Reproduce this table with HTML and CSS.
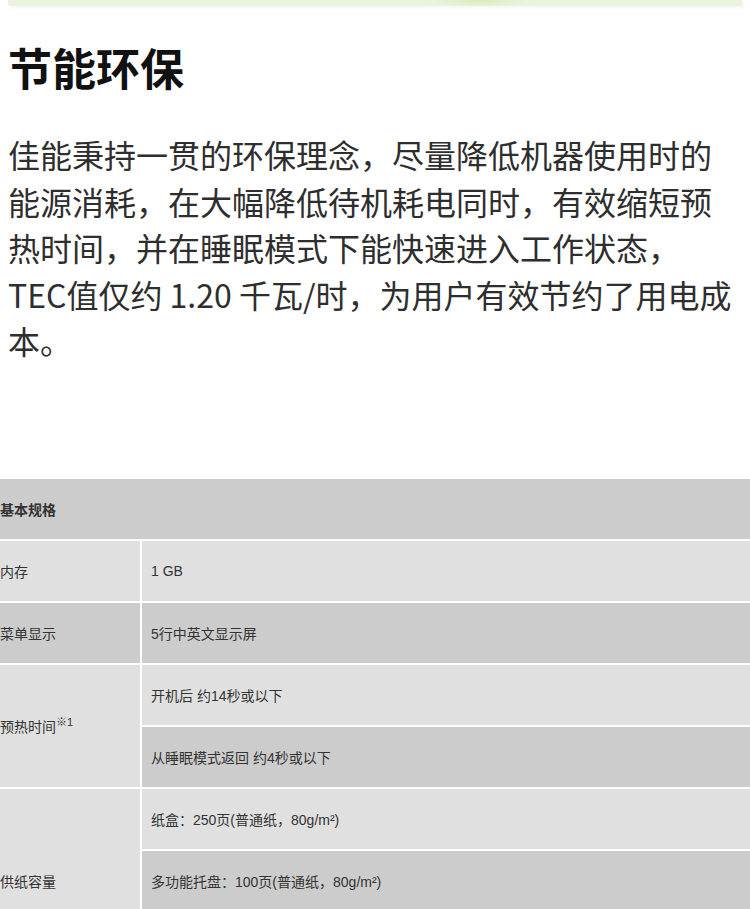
FILE: index.html
```html
<!DOCTYPE html>
<html lang="zh-CN">
<head>
<meta charset="utf-8">
<title>节能环保</title>
<link rel="stylesheet" href="styles.css">
</head>
<body>
<div class="banner-edge"></div>
<section class="eco">
  <h2 class="eco-title">节能环保</h2>
  <p class="eco-text">佳能秉持一贯的环保理念，尽量降低机器使用时的能源消耗，在大幅降低待机耗电同时，有效缩短预热时间，并在睡眠模式下能快速进入工作状态，TEC值仅约 1.20 千瓦/时，为用户有效节约了用电成本。</p>
</section>
<table class="spec">
  <colgroup><col class="spec-key"><col class="spec-val"></colgroup>
  <tr class="odd"><th colspan="2" class="spec-head">基本规格</th></tr>
  <tr class="even"><td class="k">内存</td><td class="v">1 GB</td></tr>
  <tr class="odd"><td class="k">菜单显示</td><td class="v">5行中英文显示屏</td></tr>
  <tr class="even"><td class="k" rowspan="2">预热时间<sup class="note">※1</sup></td><td class="v">开机后 约14秒或以下</td></tr>
  <tr class="odd"><td class="v">从睡眠模式返回 约4秒或以下</td></tr>
  <tr class="even"><td class="k" rowspan="3">供纸容量</td><td class="v">纸盒：250页(普通纸，80g/m²)</td></tr>
  <tr class="odd"><td class="v">多功能托盘：100页(普通纸，80g/m²)</td></tr>
  <tr class="even"><td class="v"></td></tr>
</table>
</body>
</html>
```
FILE: styles.css
```css
html, body {
  margin: 0;
  padding: 0;
  background: #ffffff;
}
body {
  font-family: "Noto Sans CJK SC", "Noto Sans", sans-serif;
  width: 750px;
  overflow-x: hidden;
}
.banner-edge {
  height: 6px;
  margin: 0 8px;
  background:
    radial-gradient(ellipse 52px 7px at 471px 0, #dcebb8 0%, rgba(220,235,184,0) 100%),
    #ebf3de;
  box-shadow: 2px 2px 3px rgba(0, 0, 0, 0.04);
}
.eco {
  padding: 0 8px;
}
.eco-title {
  margin: 31px 0 0;
  font-size: 44px;
  line-height: 60px;
  font-weight: 700;
  color: #111111;
}
.eco-text {
  margin: 34px 0 0;
  width: 724px;
  font-size: 32px;
  line-height: 46.5px;
  color: #2e2e2e;
}
.spec {
  margin: 113px 0 0 -2px;
  width: 754px;
  border-collapse: collapse;
  table-layout: fixed;
  font-family: "Liberation Sans", "Noto Sans CJK SC", sans-serif;
  font-size: 14px;
  color: #333333;
}
.spec-key { width: 142px; }
.spec td, .spec th {
  height: 60px;
  border: 2px solid #ffffff;
  vertical-align: middle;
  text-align: left;
  padding: 0;
}
.spec tr.odd > * { background: #cccccc; }
.spec tr.even > * { background: #e0e0e0; }
.spec-head {
  font-weight: 700;
  padding-left: 0;
}
.spec td.k { padding-left: 0; }
.spec td.v { padding-left: 9px; }
.note {
  font-size: 11px;
  vertical-align: 6px;
  line-height: 0;
}
```
